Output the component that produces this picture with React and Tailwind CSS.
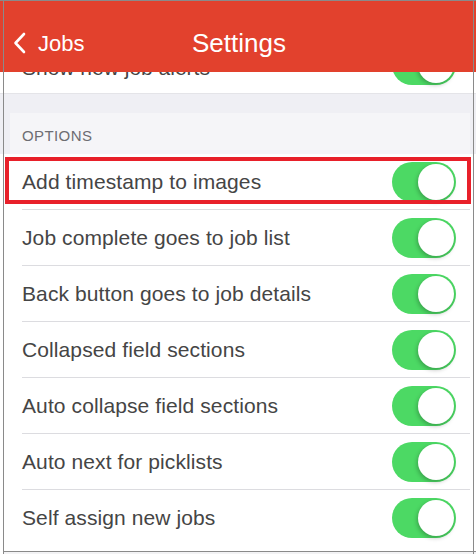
import React from "react";

const rows = [
  "Add timestamp to images",
  "Job complete goes to job list",
  "Back button goes to job details",
  "Collapsed field sections",
  "Auto collapse field sections",
  "Auto next for picklists",
  "Self assign new jobs",
];

function Toggle() {
  return (
    <div className="relative w-[64px] h-[40px] rounded-full bg-[#4cd964] shrink-0">
      <div className="absolute right-[2px] top-[2px] w-[36px] h-[36px] rounded-full bg-white shadow-[-1px_2px_4px_rgba(0,0,0,0.25)]" />
    </div>
  );
}

function Row({ label, last }) {
  return (
    <div className="relative h-[56px] flex items-center justify-between pl-[22px] pr-[20px] bg-white">
      <span className="text-[21px] text-[#454545] tracking-[0.1px]">{label}</span>
      <Toggle />
      {!last && <div className="absolute bottom-0 left-[22px] right-[6px] h-px bg-[#dcdce0]" />}
    </div>
  );
}

export default function App() {
  return (
    <div
      className="relative w-[476px] h-[554px] overflow-hidden bg-white"
      style={{ fontFamily: '"Liberation Sans", Arial, sans-serif' }}
    >
      {/* header */}
      <div className="relative z-10 h-[72px] bg-[#e2412d] flex items-center pt-[14px] text-white">
        <div className="flex items-center pl-[13px]">
          <svg width="13" height="22" viewBox="0 0 13 22" fill="none">
            <path d="M11 2 L2.5 11 L11 20" stroke="white" strokeWidth="2.6" strokeLinecap="round" strokeLinejoin="round" />
          </svg>
          <span className="ml-[12px] text-[22px]">Jobs</span>
        </div>
        <div className="absolute left-0 right-0 top-[14px] bottom-0 flex items-center justify-center">
          <span className="text-[26px] pl-[2px]">Settings</span>
        </div>
      </div>

      {/* partially hidden row */}
      <div className="h-[21px] overflow-hidden bg-white">
        <div className="-mt-[32px] h-[56px] flex items-center justify-between pl-[22px] pr-[20px]">
          <span className="text-[21px] text-[#454545]">Show new job alerts</span>
          <div className="-mt-[6px]">
            <Toggle />
          </div>
        </div>
      </div>
      <div className="h-px bg-[#e4e4e8]" />

      {/* section */}
      <div className="h-[60px] bg-[#efeff4] flex flex-col">
        <div className="h-[19px]" />
        <div className="ml-[10px] mr-[6px] flex-1 bg-[#f5f5f8] flex items-center pl-[12px] pt-[6px]">
          <span className="text-[15px] text-[#6d6d72] tracking-[0.4px]">OPTIONS</span>
        </div>
      </div>

      {/* rows */}
      <div>
        {rows.map((r, i) => (
          <Row key={r} label={r} last={i === rows.length - 1} />
        ))}
      </div>

      {/* highlight box */}
      <div className="absolute left-[5px] top-[157px] w-[466px] h-[47px] border-[4px] border-[#e8202a] z-20" />

      {/* frame lines */}
      <div className="absolute left-0 right-0 top-0 h-px bg-[#8a8a8a] z-30" />
      <div className="absolute left-[3px] top-0 bottom-0 w-px bg-[#8a8a8a] z-30" />
      <div className="absolute right-[2px] top-0 bottom-0 w-px bg-[#8a8a8a] z-30" />
      <div className="absolute left-[3px] right-0 top-[551px] h-px bg-[#8a8a8a] z-30" />
      <div className="absolute left-[4px] right-0 top-[552px] bottom-0 bg-[#f3f3f5] z-20" />
    </div>
  );
}
